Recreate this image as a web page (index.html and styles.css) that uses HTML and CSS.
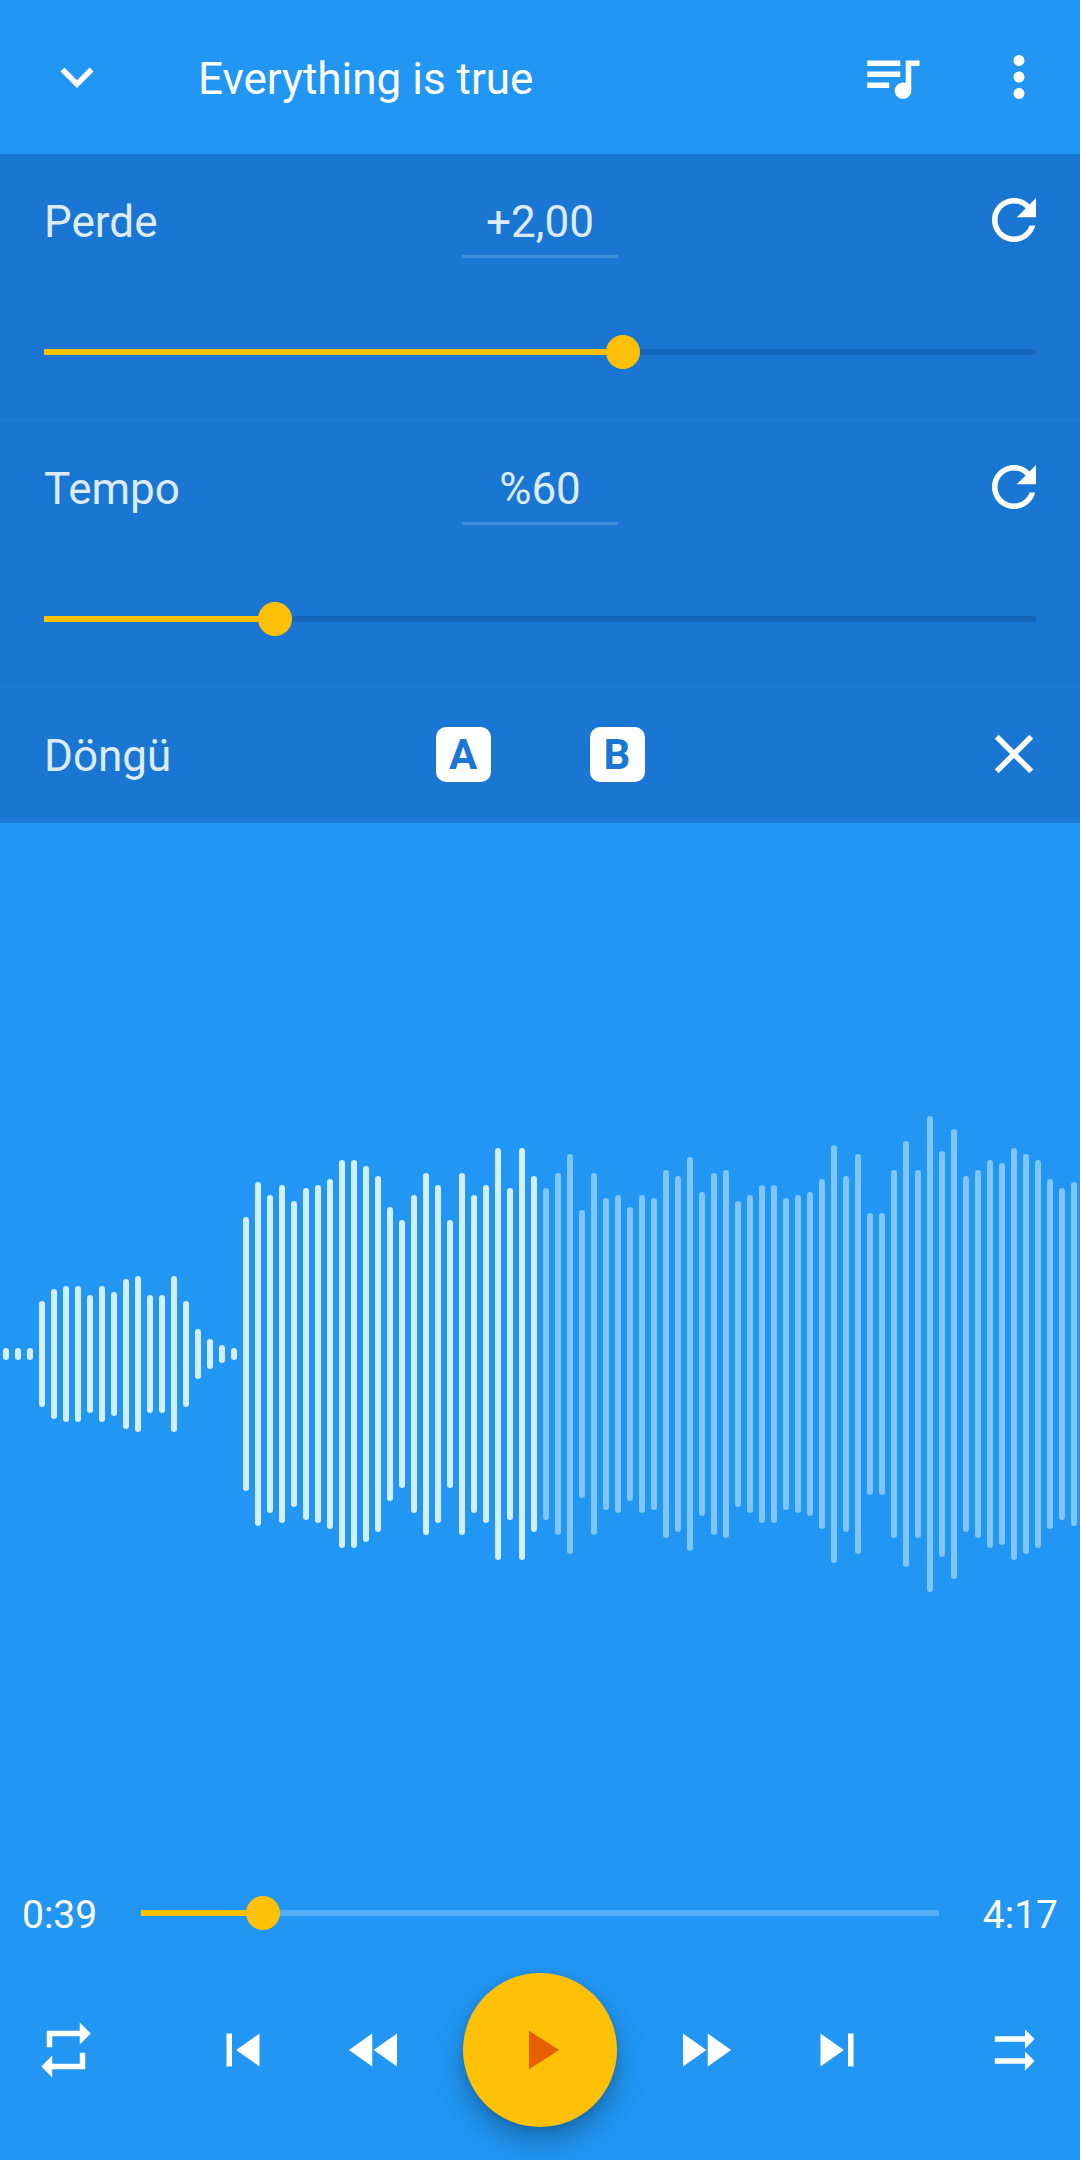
FILE: index.html
```html
<!DOCTYPE html>
<html lang="tr">
<head>
<meta charset="utf-8">
<meta name="viewport" content="width=device-width, initial-scale=1">
<title>Everything is true</title>
<link rel="stylesheet" href="styles.css">
</head>
<body>
<header class="app-bar">
  <button class="icon-button app-bar-back" type="button" aria-label="Kapat">
    <svg class="icon" viewBox="0 0 24 24"><path d="M16.59 8.59L12 13.17 7.41 8.59 6 10l6 6 6-6z"/></svg>
  </button>
  <h1 class="app-bar-title">Everything is true</h1>
  <button class="icon-button" type="button" aria-label="Sıra">
    <svg class="icon" viewBox="0 0 24 24"><path d="M15 6H3v2h12V6zm0 4H3v2h12v-2zM3 16h8v-2H3v2zM17 6v8.18c-.31-.11-.65-.18-1-.18-1.66 0-3 1.34-3 3s1.34 3 3 3 3-1.34 3-3V8h3V6h-5z"/></svg>
  </button>
  <button class="icon-button app-bar-more" type="button" aria-label="Diğer seçenekler">
    <svg class="icon" viewBox="0 0 24 24"><path d="M12 8c1.1 0 2-.9 2-2s-.9-2-2-2-2 .9-2 2 .9 2 2 2zm0 2c-1.1 0-2 .9-2 2s.9 2 2 2 2-.9 2-2-.9-2-2-2zm0 6c-1.1 0-2 .9-2 2s.9 2 2 2 2-.9 2-2-.9-2-2-2z"/></svg>
  </button>
</header>

<main class="player">
  <section class="panel">
    <div class="setting">
      <div class="setting-row">
        <label class="setting-label" for="pitch">Perde</label>
        <input class="setting-value" type="text" value="+2,00" aria-label="Perde değeri">
        <button class="icon-button setting-action" type="button" aria-label="Perdeyi sıfırla">
          <svg class="icon" viewBox="0 0 24 24"><path d="M17.65 6.35C16.2 4.9 14.21 4 12 4c-4.42 0-7.99 3.58-7.99 8s3.57 8 7.99 8c3.73 0 6.84-2.55 7.73-6h-2.08c-.82 2.33-3.04 4-5.65 4-3.31 0-6-2.69-6-6s2.69-6 6-6c1.66 0 3.14.69 4.22 1.78L13 11h7V4l-2.35 2.35z"/></svg>
        </button>
      </div>
      <div class="slider-row">
        <input class="slider" id="pitch" type="range" min="-12" max="12" step="1" value="2">
      </div>
    </div>
    <div class="setting">
      <div class="setting-row">
        <label class="setting-label" for="tempo">Tempo</label>
        <input class="setting-value" type="text" value="%60" aria-label="Tempo değeri">
        <button class="icon-button setting-action" type="button" aria-label="Tempoyu sıfırla">
          <svg class="icon" viewBox="0 0 24 24"><path d="M17.65 6.35C16.2 4.9 14.21 4 12 4c-4.42 0-7.99 3.58-7.99 8s3.57 8 7.99 8c3.73 0 6.84-2.55 7.73-6h-2.08c-.82 2.33-3.04 4-5.65 4-3.31 0-6-2.69-6-6s2.69-6 6-6c1.66 0 3.14.69 4.22 1.78L13 11h7V4l-2.35 2.35z"/></svg>
        </button>
      </div>
      <div class="slider-row">
        <input class="slider" id="tempo" type="range" min="25" max="175" step="1" value="60">
      </div>
    </div>
    <div class="setting">
      <div class="setting-row">
        <span class="setting-label">Döngü</span>
        <div class="loop-points">
          <button class="loop-point" type="button">A</button>
          <button class="loop-point" type="button">B</button>
        </div>
        <button class="icon-button setting-action" type="button" aria-label="Döngüyü temizle">
          <svg class="icon" viewBox="0 0 24 24"><path d="M19 6.41L17.59 5 12 10.59 6.41 5 5 6.41 10.59 12 5 17.59 6.41 19 12 13.41 17.59 19 19 17.59 13.41 12z"/></svg>
        </button>
      </div>
    </div>
  </section>

  <div class="wave" id="wave"></div>

  <div class="seek">
    <span class="seek-time">0:39</span>
    <div class="seek-track">
      <input class="slider slider-light" id="seek" type="range" min="0" max="257000" step="100" value="39300" aria-label="Konum">
    </div>
    <span class="seek-time seek-total">4:17</span>
  </div>

  <div class="controls">
    <button class="icon-button" type="button" aria-label="Tekrarla">
      <svg class="icon" viewBox="0 0 24 24"><path d="M7 7h10v3l4-4-4-4v3H5v6h2V7zm10 10H7v-3l-4 4 4 4v-3h12v-6h-2v4z"/></svg>
    </button>
    <div class="transport">
      <button class="icon-button" type="button" aria-label="Önceki">
        <svg class="icon" viewBox="0 0 24 24"><path d="M6 6h2v12H6zm3.5 6l8.5 6V6z"/></svg>
      </button>
      <button class="icon-button" type="button" aria-label="Geri sar">
        <svg class="icon" viewBox="0 0 24 24"><path d="M11 18V6l-8.500 6 8.500 6zm.5-6l8.500 6V6l-8.500 6z"/></svg>
      </button>
      <button class="play" type="button" aria-label="Oynat">
        <svg class="icon" viewBox="0 0 24 24"><path d="M8 5v14l11-7z"/></svg>
      </button>
      <button class="icon-button" type="button" aria-label="İleri sar">
        <svg class="icon" viewBox="0 0 24 24"><path d="M4 18l8.500-6L4 6v12zm9-12v12l8.500-6L13 6z"/></svg>
      </button>
      <button class="icon-button" type="button" aria-label="Sonraki">
        <svg class="icon" viewBox="0 0 24 24"><path d="M6 18l8.500-6L6 6v12zM16 6v12h2V6h-2z"/></svg>
      </button>
    </div>
    <button class="icon-button" type="button" aria-label="Sırayla çal">
      <svg class="icon" viewBox="0 0 24 24"><path d="M16 4.500V7H5v2h11v2.500L19.500 8zM16 12.500V15H5v2h11v2.500l3.500-3.500z"/></svg>
    </button>
  </div>
</main>
<script src="player.js"></script>
</body>
</html>
```
FILE: styles.css
```css
:root {
  --primary: #2196f3;
  --primary-dark: #1976d2;
  --accent: #ffc107;
  --text-soft: #ddebf9;
  --thumb: 34px;
}

* {
  box-sizing: border-box;
}

body {
  display: flex;
  flex-direction: column;
  min-height: 100vh;
  margin: 0;
  background: var(--primary);
  color: #fff;
  font-family: Roboto, sans-serif;
  font-size: 44px;
  line-height: 52px;
}

button,
input {
  margin: 0;
  padding: 0;
  border: 0;
  background: none;
  color: inherit;
  font: inherit;
}

.icon {
  display: block;
  width: 66px;
  height: 66px;
  fill: currentColor;
}

.icon-button {
  display: flex;
  flex: none;
  align-items: center;
  justify-content: center;
  width: 132px;
  height: 132px;
}

/* App bar */

.app-bar {
  display: flex;
  align-items: center;
  height: 154px;
}

.app-bar-back {
  width: 154px;
}

.app-bar-title {
  flex: 1;
  margin: 0;
  padding: 4px 0 0 44px;
  font-size: 44px;
  font-weight: 400;
}

.app-bar-more {
  width: 122px;
}

/* Pitch, tempo and loop settings */

.player {
  display: flex;
  flex: 1;
  flex-direction: column;
}

.panel {
  background: var(--primary-dark);
}

.setting {
  border-bottom: 3px solid #1d7ad6;
}

.setting-row {
  display: grid;
  grid-template-columns: 1fr auto 1fr;
  align-items: center;
  height: 132px;
}

.setting-label {
  padding: 4px 0 0 44px;
  color: var(--text-soft);
}

.setting-value {
  align-self: end;
  width: 156px;
  height: 76px;
  margin-bottom: 28px;
  padding-top: 6px;
  border-bottom: 3px solid #428fdc;
  color: var(--text-soft);
  text-align: center;
}

.setting-action {
  justify-self: end;
}

.slider-row {
  display: flex;
  align-items: center;
  height: 132px;
  padding: 0 44px;
}

.loop-points {
  display: flex;
  gap: 99px;
}

.loop-point {
  width: 55px;
  height: 55px;
  border-radius: 10px;
  background: #fff;
  color: var(--primary-dark);
  font-size: 42px;
  font-weight: 700;
  line-height: 55px;
}

/* Range sliders: the thumb overhangs both ends of the track by half its width */

.slider {
  --value: 0;
  --rail: #1565b8;
  flex: 1;
  min-width: 0;
  height: var(--thumb);
  margin: 0 calc(var(--thumb) / -2);
  appearance: none;
  background:
    linear-gradient(var(--accent), var(--accent)) calc(var(--thumb) / 2) center / calc((100% - var(--thumb)) * var(--value)) 6px no-repeat,
    linear-gradient(var(--rail), var(--rail)) center / calc(100% - var(--thumb)) 6px no-repeat;
}

.slider-light {
  --rail: #55b0f8;
}

.slider::-webkit-slider-thumb {
  width: var(--thumb);
  height: var(--thumb);
  appearance: none;
  border-radius: 50%;
  background: var(--accent);
}

/* Waveform */

.wave {
  display: flex;
  flex: 1;
  align-items: center;
  justify-content: space-between;
  min-height: 500px;
  padding: 0 3px;
}

.wave-bar {
  width: 6px;
  border-radius: 3px;
  background: #80c6fa;
}

.wave-bar-played {
  background: #d3eefe;
}

/* Seek bar */

.seek {
  display: flex;
  align-items: center;
  height: 55px;
  padding: 0 22px;
}

.seek-time {
  width: 119px;
  padding-top: 4px;
  font-size: 39px;
}

.seek-total {
  text-align: right;
}

.seek-track {
  display: flex;
  flex: 1;
}

/* Playback controls */

.controls {
  display: flex;
  align-items: center;
  justify-content: space-between;
  height: 220px;
}

.transport {
  display: flex;
  align-items: center;
}

.play {
  display: flex;
  align-items: center;
  justify-content: center;
  width: 154px;
  height: 154px;
  margin: 0 22px;
  border-radius: 50%;
  background: var(--accent);
  color: #e65f00;
  box-shadow: 0 14px 28px rgba(0, 0, 0, 0.28), 0 2px 6px rgba(0, 0, 0, 0.1);
}
```
FILE: player.js
```js
const levels = [
  12, 12, 12, 106, 130, 136, 136, 118, 136, 124, 150, 156, 118, 118, 156,
  106, 50, 30, 18, 12, 274, 344, 318, 338, 306, 332, 338, 350, 388, 388,
  376, 356, 294, 268, 318, 362, 338, 268, 362, 318, 338, 412, 332, 412, 356,
  332, 362, 400, 288, 362, 312, 318, 294, 318, 312, 368, 356, 394, 324, 362,
  368, 306, 318, 338, 338, 312, 318, 324, 350, 418, 356, 400, 282, 282, 368,
  426, 368, 476, 406, 450, 356, 368, 388, 382, 412, 400, 388, 350, 332, 344
];

const wave = document.getElementById("wave");
levels.forEach((level, index) => {
  const bar = document.createElement("span");
  bar.className = index < levels.length / 2 ? "wave-bar wave-bar-played" : "wave-bar";
  bar.style.height = level + "px";
  wave.append(bar);
});

document.querySelectorAll(".slider").forEach((slider) => {
  const paint = () => {
    const share = (slider.value - slider.min) / (slider.max - slider.min);
    slider.style.setProperty("--value", share);
  };
  slider.addEventListener("input", paint);
  paint();
});
```
